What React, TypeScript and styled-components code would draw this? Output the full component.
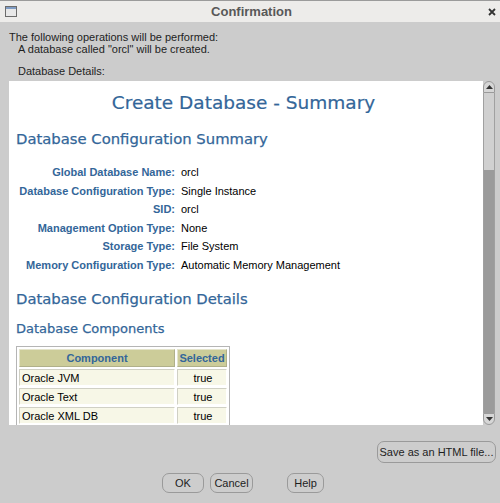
import React from 'react';
import styled, { createGlobalStyle } from 'styled-components';

const GlobalStyle = createGlobalStyle`
  html, body {
    margin: 0;
    padding: 0;
    background: #cccccc;
  }
  body {
    font-family: 'Liberation Sans', Arial, sans-serif;
    font-size: 11px;
    color: #1e1e1e;
  }
`;

const Window = styled.div`
  width: 500px;
  height: 503px;
  display: flex;
  flex-direction: column;
  background: #cccccc;
  overflow: hidden;
`;

const TitleBar = styled.div`
  height: 22px;
  box-sizing: border-box;
  border-top: 1px solid #9b9b9b;
  background: #edecea;
  display: grid;
  grid-template-columns: 24px 1fr 24px;
  align-items: center;
`;

const TitleText = styled.div`
  text-align: center;
  font: bold 13px 'Liberation Sans', Arial, sans-serif;
  color: #585858;
  padding-left: 3px;
`;

const IconCell = styled.div<{ $end?: boolean }>`
  display: flex;
  align-items: center;
  justify-content: ${(p) => (p.$end ? 'flex-end' : 'flex-start')};
  padding: ${(p) => (p.$end ? '0 4px 0 0' : '0 0 0 5px')};
`;

const Body = styled.div`
  flex: 1;
  display: flex;
  flex-direction: column;
  padding: 9px 0 0 9px;
`;

const Message = styled.div<{ $indent?: boolean; $gap?: number }>`
  line-height: 12px;
  padding-left: ${(p) => (p.$indent ? '9px' : '0')};
  margin-top: ${(p) => p.$gap ?? 0}px;
`;

const ScrollPane = styled.div`
  margin-top: 4px;
  width: 486px;
  height: 344px;
  display: flex;
`;

const Viewport = styled.div`
  flex: 1;
  background: #ffffff;
  overflow: hidden;
  padding: 11px 0 0 7px;
`;

const PageTitle = styled.div`
  font: 18.5px 'DejaVu Sans', sans-serif;
  line-height: 22px;
  color: #336699;
  text-align: center;
  padding-right: 12px;
  -webkit-text-stroke: 0.2px #336699;
`;

const Heading = styled.div<{ $size: number; $gap: number }>`
  font-family: 'DejaVu Sans', sans-serif;
  font-size: ${(p) => p.$size}px;
  line-height: 17px;
  color: #336699;
  margin-top: ${(p) => p.$gap}px;
  -webkit-text-stroke: 0.25px #336699;
`;

const SummaryGrid = styled.div`
  margin-top: 16px;
  margin-left: -7px;
  display: grid;
  grid-template-columns: 166px auto;
  column-gap: 6px;
  grid-auto-rows: 18.5px;
  align-items: center;
`;

const Label = styled.div`
  text-align: right;
  font-weight: bold;
  color: #336699;
`;

const Value = styled.div`
  color: #000;
`;

const CompTable = styled.table`
  margin-top: 9px;
  border-collapse: separate;
  border-spacing: 2px;
  border: 1px solid #b5b5b5;
  font-size: 11px;
`;

const HeadCell = styled.th<{ $w: number }>`
  width: ${(p) => p.$w}px;
  height: 18px;
  box-sizing: border-box;
  padding: 0;
  background: #cccc99;
  color: #336699;
  font-weight: bold;
  text-align: center;
  border: 1px solid;
  border-color: #e4e4cc #b0b08a #b0b08a #e4e4cc;
`;

const Cell = styled.td<{ $center?: boolean }>`
  height: 17px;
  box-sizing: border-box;
  padding: 0 0 0 2px;
  background: #f7f7e7;
  color: #000;
  text-align: ${(p) => (p.$center ? 'center' : 'left')};
  border: 1px solid;
  border-color: #d0d0c4 #ffffff #ffffff #d0d0c4;
`;

const ScrollBar = styled.div`
  width: 12px;
  display: flex;
  flex-direction: column;
`;

const ArrowButton = styled.div<{ $down?: boolean }>`
  height: 12px;
  box-sizing: border-box;
  border: 1px solid #9a9a9a;
  border-radius: ${(p) => (p.$down ? '0 0 6px 6px' : '6px 6px 0 0')};
  background: #d6d6d6;
  display: flex;
  align-items: center;
  justify-content: center;
`;

const Track = styled.div`
  flex: 1;
  display: flex;
  flex-direction: column;
  border-left: 1px solid #a0a0a0;
  border-right: 1px solid #a0a0a0;
  background: #d0d0d0;
`;

const TrackPart = styled.div<{ $grow: number; $thumb?: boolean }>`
  flex: ${(p) => p.$grow};
  background: ${(p) => (p.$thumb ? '#9b9b9b' : 'transparent')};
`;

const SaveRow = styled.div`
  margin-top: 16px;
  display: flex;
  justify-content: flex-end;
  padding-right: 4px;
`;

const ButtonRow = styled.div`
  margin-top: 10px;
  display: flex;
  padding-left: 153px;
`;

const Button = styled.button<{ $w: number; $h: number; $gap?: number }>`
  width: ${(p) => p.$w}px;
  height: ${(p) => p.$h}px;
  margin-left: ${(p) => p.$gap ?? 0}px;
  padding: 0;
  box-sizing: border-box;
  border: 1px solid #9a9a9a;
  border-radius: 7px;
  background: #cdcdcd;
  font: 11px 'Liberation Sans', Arial, sans-serif;
  color: #1e1e1e;
  white-space: nowrap;
  overflow: hidden;
`;

const WindowIcon = () => (
  <svg width="12" height="11" viewBox="0 0 12 11">
    <rect x="0.5" y="0.5" width="11" height="10" fill="#e8e8e8" stroke="#6b6b6b" />
    <rect x="1" y="1" width="10" height="2" fill="#7f9cc4" />
  </svg>
);

const CloseIcon = () => (
  <svg width="8" height="8" viewBox="0 0 8 8">
    <path d="M1 1 L7 7 M7 1 L1 7" stroke="#333" strokeWidth="1.8" />
  </svg>
);

const Arrow = ({ down }: { down?: boolean }) => (
  <svg width="7" height="4" viewBox="0 0 7 4">
    <polygon points={down ? '0,0 7,0 3.5,4' : '0,4 7,4 3.5,0'} fill="#333" />
  </svg>
);

const summary = [
  ['Global Database Name:', 'orcl'],
  ['Database Configuration Type:', 'Single Instance'],
  ['SID:', 'orcl'],
  ['Management Option Type:', 'None'],
  ['Storage Type:', 'File System'],
  ['Memory Configuration Type:', 'Automatic Memory Management'],
];

const components = ['Oracle JVM', 'Oracle Text', 'Oracle XML DB'];

export default function App() {
  return (
    <Window>
      <GlobalStyle />
      <TitleBar>
        <IconCell>
          <WindowIcon />
        </IconCell>
        <TitleText>Confirmation</TitleText>
        <IconCell $end>
          <CloseIcon />
        </IconCell>
      </TitleBar>
      <Body>
        <Message>The following operations will be performed:</Message>
        <Message $indent>A database called "orcl" will be created.</Message>
        <Message $indent $gap={10}>
          Database Details:
        </Message>
        <ScrollPane>
          <Viewport>
            <PageTitle>Create Database - Summary</PageTitle>
            <Heading $size={14.8} $gap={16}>
              Database Configuration Summary
            </Heading>
            <SummaryGrid>
              {summary.map(([label, value]) => (
                <React.Fragment key={label}>
                  <Label>{label}</Label>
                  <Value>{value}</Value>
                </React.Fragment>
              ))}
            </SummaryGrid>
            <Heading $size={14.8} $gap={16}>
              Database Configuration Details
            </Heading>
            <Heading $size={13} $gap={13}>
              Database Components
            </Heading>
            <CompTable>
              <thead>
                <tr>
                  <HeadCell $w={156}>Component</HeadCell>
                  <HeadCell $w={50}>Selected</HeadCell>
                </tr>
              </thead>
              <tbody>
                {components.map((c) => (
                  <tr key={c}>
                    <Cell>{c}</Cell>
                    <Cell $center>true</Cell>
                  </tr>
                ))}
              </tbody>
            </CompTable>
          </Viewport>
          <ScrollBar>
            <ArrowButton>
              <Arrow />
            </ArrowButton>
            <Track>
              <TrackPart $grow={77} />
              <TrackPart $grow={243} $thumb />
            </Track>
            <ArrowButton $down>
              <Arrow down />
            </ArrowButton>
          </ScrollBar>
        </ScrollPane>
        <SaveRow>
          <Button $w={119} $h={22}>
            Save as an HTML file...
          </Button>
        </SaveRow>
        <ButtonRow>
          <Button $w={42} $h={20}>
            OK
          </Button>
          <Button $w={43} $h={20} $gap={6}>
            Cancel
          </Button>
          <Button $w={37} $h={20} $gap={34}>
            Help
          </Button>
        </ButtonRow>
      </Body>
    </Window>
  );
}
